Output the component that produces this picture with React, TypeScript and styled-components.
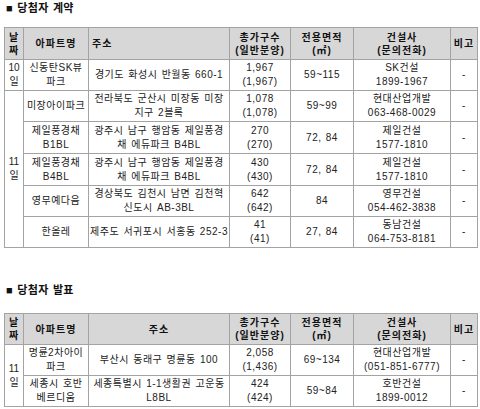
import React from 'react';
import styled, { createGlobalStyle } from 'styled-components';

const GlobalStyle = createGlobalStyle`
  html, body {
    margin: 0;
    padding: 0;
    background: #fff;
  }
  body {
    font-family: "Liberation Sans", "Noto Sans CJK KR", sans-serif;
    color: #222;
  }
`;

interface Row {
  apt: string;
  addr: string;
  units: string;
  area: string;
  builder: string;
  h: number;
}

interface Group {
  day: string;
  rows: Row[];
}

const contractGroups: Group[] = [
  {
    day: '10\n일',
    rows: [
      { apt: '신동탄SK뷰\n파크', addr: '경기도 화성시 반월동 660-1', units: '1,967\n(1,967)', area: '59~115', builder: 'SK건설\n1899-1967', h: 31 },
    ],
  },
  {
    day: '11\n일',
    rows: [
      { apt: '미장아이파크', addr: '전라북도 군산시 미장동 미장\n지구 2블록', units: '1,078\n(1,078)', area: '59~99', builder: '현대산업개발\n063-468-0029', h: 31 },
      { apt: '제일풍경채\nB1BL', addr: '광주시 남구 행암동 제일풍경\n채 에듀파크 B4BL', units: '270\n(270)', area: '72, 84', builder: '제일건설\n1577-1810', h: 32 },
      { apt: '제일풍경채\nB4BL', addr: '광주시 남구 행암동 제일풍경\n채 에듀파크 B4BL', units: '430\n(430)', area: '72, 84', builder: '제일건설\n1577-1810', h: 32 },
      { apt: '영무예다음', addr: '경상북도 김천시 남면 김천혁\n신도시 AB-3BL', units: '642\n(642)', area: '84', builder: '영무건설\n054-462-3838', h: 31 },
      { apt: '한올레', addr: '제주도 서귀포시 서홍동 252-3', units: '41\n(41)', area: '27, 84', builder: '동남건설\n064-753-8181', h: 31 },
    ],
  },
];

const announceGroups: Group[] = [
  {
    day: '11\n일',
    rows: [
      { apt: '명륜2차아이\n파크', addr: '부산시 동래구 명륜동 100', units: '2,058\n(1,436)', area: '69~134', builder: '현대산업개발\n(051-851-6777)', h: 31 },
      { apt: '세종시 호반\n베르디움', addr: '세종특별시 1-1생활권 고운동\nL8BL', units: '424\n(424)', area: '59~84', builder: '호반건설\n1899-0012', h: 31 },
    ],
  },
];

const colWidths = [19, 65, 141, 61, 63, 97, 27];

const Page = styled.div`
  width: 480px;
  padding-top: 0;
`;

const Title = styled.h2<{ $top: number; $bottom: number }>`
  margin: ${p => p.$top}px 0 ${p => p.$bottom}px 6px;
  font-size: 11px;
  line-height: 17px;
  font-weight: bold;
  color: #111;
  letter-spacing: 0.3px;
  word-spacing: 1px;
`;

const Table = styled.table`
  margin-left: 4px;
  width: 473px;
  table-layout: fixed;
  border-collapse: collapse;
  border: 1px solid #9a9a9a;
`;

const HeadRow = styled.tr<{ $h: number }>`
  height: ${p => p.$h}px;
  background: #d7d7d7;
`;

const BodyRow = styled.tr<{ $h: number }>`
  height: ${p => p.$h}px;
`;

const Th = styled.th<{ $align?: string }>`
  border: 1px solid #a3a3a3;
  padding: 0 0 0 ${p => (p.$align === 'left' ? '3px' : '0')};
  font-size: 10px;
  line-height: 13px;
  font-weight: bold;
  letter-spacing: 1px;
  color: #111;
  text-align: ${p => p.$align || 'center'};
  vertical-align: middle;
  white-space: pre;
`;

const Td = styled.td`
  border: 1px solid #a3a3a3;
  padding: 0;
  font-size: 10px;
  line-height: 14px;
  letter-spacing: 0.5px;
  word-spacing: 1px;
  color: #222;
  text-align: center;
  vertical-align: middle;
  white-space: pre;
`;

const DayCell = styled(Td)`
  letter-spacing: 0;
`;

const Header: React.FC<{ h: number; addrAlign?: string }> = ({ h, addrAlign }) => (
  <HeadRow $h={h}>
    <Th>{'날\n짜'}</Th>
    <Th>아파트명</Th>
    <Th $align={addrAlign}>주소</Th>
    <Th>{'총가구수\n(일반분양)'}</Th>
    <Th>{'전용면적\n(㎡)'}</Th>
    <Th>{'건설사\n(문의전화)'}</Th>
    <Th>비고</Th>
  </HeadRow>
);

const ScheduleTable: React.FC<{ groups: Group[]; headH: number; addrAlign?: string }> = ({ groups, headH, addrAlign }) => (
  <Table>
    <colgroup>
      {colWidths.map((w, i) => (
        <col key={i} style={{ width: w }} />
      ))}
    </colgroup>
    <thead>
      <Header h={headH} addrAlign={addrAlign} />
    </thead>
    <tbody>
      {groups.map(g =>
        g.rows.map((r, i) => (
          <BodyRow key={g.day + i} $h={r.h}>
            {i === 0 && <DayCell rowSpan={g.rows.length}>{g.day}</DayCell>}
            <Td>{r.apt}</Td>
            <Td>{r.addr}</Td>
            <Td>{r.units}</Td>
            <Td>{r.area}</Td>
            <Td>{r.builder}</Td>
            <Td>-</Td>
          </BodyRow>
        ))
      )}
    </tbody>
  </Table>
);

export default function App() {
  return (
    <Page>
      <GlobalStyle />
      <Title $top={0} $bottom={10}>■ 당첨자 계약</Title>
      <ScheduleTable groups={contractGroups} headH={32} addrAlign='left' />
      <Title $top={34} $bottom={14}>■ 당첨자 발표</Title>
      <ScheduleTable groups={announceGroups} headH={31} />
    </Page>
  );
}
